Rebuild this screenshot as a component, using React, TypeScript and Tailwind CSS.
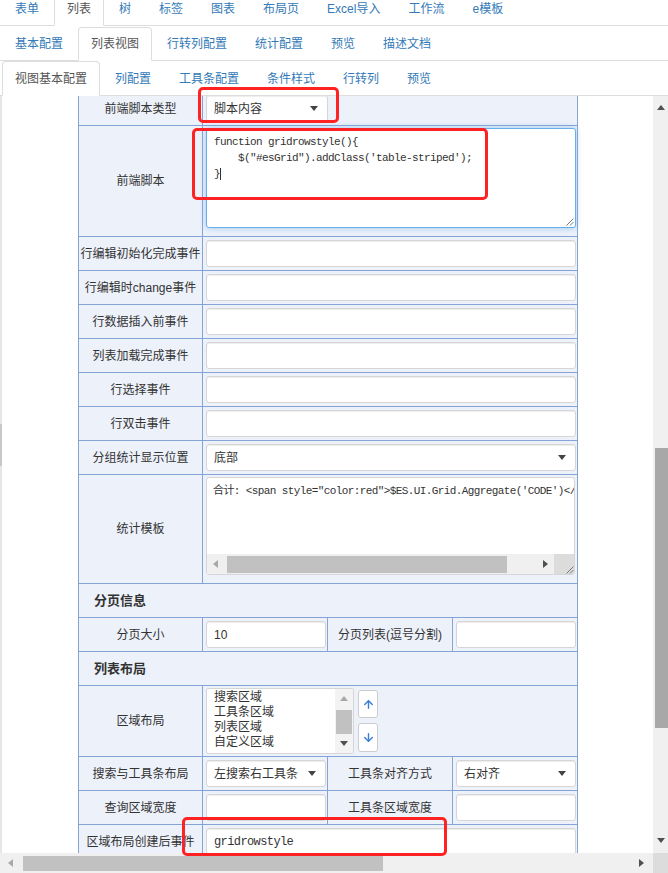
import { ArrowDown, ArrowUp } from "lucide-react";

const MONO = "font-['Liberation_Mono','Noto_Sans_CJK_SC',monospace] text-[11px] tracking-[-0.6px]";
const cell = "border-r border-b border-[#86a3d6] bg-[#edf1fa]";
const labelCell = `${cell} flex items-center justify-center text-[12px] text-[#333] whitespace-nowrap`;
const valueCell = `${cell} flex items-center pl-[3px] pr-[1px]`;
const boxBase = "h-[27px] bg-white border border-[#d6d6d6] rounded-[3px] shadow-[inset_0_1px_1px_rgba(0,0,0,0.075)] flex items-center text-[12px] text-[#333] overflow-hidden whitespace-nowrap";

function Caret({ dir = "down", className = "" }: { dir?: "up" | "down" | "left" | "right"; className?: string }) {
  const pts = { down: "0,0 8,0 4,5", up: "0,5 8,5 4,0", left: "5,0 5,8 0,4", right: "0,0 0,8 5,4" }[dir];
  const vertical = dir === "up" || dir === "down";
  return (
    <svg width={vertical ? 8 : 5} height={vertical ? 5 : 8} className={className}>
      <polygon points={pts} fill="currentColor" />
    </svg>
  );
}

function Grip() {
  return (
    <svg width="10" height="10">
      <path d="M9.5 2.5 L2.5 9.5 M9.5 6 L6 9.5" stroke="#777" strokeWidth="1" />
    </svg>
  );
}

function Input({ value = "", mono = false, className = "w-full" }: { value?: string; mono?: boolean; className?: string }) {
  return <div className={`${className} ${boxBase} px-[7px] ${mono ? MONO : ""}`}>{value}</div>;
}

function Select({ value, className = "w-full" }: { value: string; className?: string }) {
  return (
    <div className={`${className} ${boxBase} justify-between pl-[7px] pr-[9px]`}>
      <span>{value}</span>
      <Caret className="text-[#444]" />
    </div>
  );
}

function TabRow({ items, active, rowClass, tabClass }: { items: string[]; active: number; rowClass: string; tabClass: string }) {
  return (
    <div className={`flex items-end pl-[2px] border-b border-[#ddd] ${rowClass}`}>
      {items.map((t, i) => (
        <div
          key={t}
          className={`${tabClass} -mb-px mr-[2px] px-[12px] border text-[12px] whitespace-nowrap ${
            i === active ? "bg-white border-[#ddd] border-b-white text-[#555]" : "border-transparent text-[#337ab7]"
          }`}
        >
          {t}
        </div>
      ))}
    </div>
  );
}

function Label({ text, h = "h-[34px]" }: { text: string; h?: string }) {
  return <div className={`${labelCell} ${h}`}>{text}</div>;
}

function Section({ text }: { text: string }) {
  return <div className={`${cell} col-span-4 h-[34px] flex items-center pl-[15px] text-[13px] font-bold text-[#333]`}>{text}</div>;
}

const events = ["行编辑初始化完成事件", "行编辑时change事件", "行数据插入前事件", "列表加载完成事件", "行选择事件", "行双击事件"];

export default function App() {
  return (
    <div className="relative w-[668px] h-[873px] overflow-hidden bg-white font-['Liberation_Sans','Noto_Sans_CJK_SC',sans-serif] text-[#333]">
      <TabRow
        items={["表单", "列表", "树", "标签", "图表", "布局页", "Excel导入", "工作流", "e模板"]}
        active={1}
        rowClass="h-[26px]"
        tabClass="h-[26px] border-t-0 pt-[1px] leading-[16px]"
      />
      <TabRow
        items={["基本配置", "列表视图", "行转列配置", "统计配置", "预览", "描述文档"]}
        active={1}
        rowClass="h-[35px]"
        tabClass="h-[34px] flex items-center rounded-t-[4px]"
      />
      <TabRow
        items={["视图基本配置", "列配置", "工具条配置", "条件样式", "行转列", "预览"]}
        active={0}
        rowClass="h-[35px]"
        tabClass="h-[35px] flex items-center rounded-t-[4px]"
      />

      <div className="flex h-[757px]">
        <div className="w-[2px] bg-[#e6e6e6]">
          <div className="mt-[328px] h-[42px] bg-[#c8c8c8]" />
        </div>

        <div className="flex-1 overflow-hidden">
          <div className="ml-[76px] -mt-[5px] w-[500px] grid grid-cols-[124px_125px_125px_125px] border-l border-t border-[#86a3d6]">
            <Label text="前端脚本类型" />
            <div className={`${valueCell} col-span-3 h-[34px]`}>
              <Select value="脚本内容" className="w-[122px]" />
            </div>

            <Label text="前端脚本" h="h-[111px]" />
            <div className={`${cell} col-span-3 h-[111px] pl-[3px] pr-[1px] pt-[2px]`}>
              <div className="relative h-[100px] bg-white border border-[#66afe9] rounded-[3px] shadow-[0_0_6px_rgba(102,175,233,0.6)] px-[7px] pt-[5px]">
                <div className={`${MONO} leading-[16px] whitespace-pre text-[#333]`}>
                  <div>function gridrowstyle(){"{"}</div>
                  <div>{"    $(\"#esGrid\").addClass('table-striped');"}</div>
                  <div>
                    <span className="border-r border-[#333]">{"}"}</span>
                  </div>
                </div>
                <div className="absolute right-[1px] bottom-[1px]">
                  <Grip />
                </div>
              </div>
            </div>

            {events.map((e) => (
              <div key={e} className="contents">
                <Label text={e} />
                <div className={`${valueCell} col-span-3 h-[34px]`}>
                  <Input />
                </div>
              </div>
            ))}

            <Label text="分组统计显示位置" />
            <div className={`${valueCell} col-span-3 h-[34px]`}>
              <Select value="底部" />
            </div>

            <Label text="统计模板" h="h-[109px]" />
            <div className={`${cell} col-span-3 h-[109px] pl-[3px] pr-[2px] pt-[2px]`}>
              <div className="h-[98px] bg-white border border-[#d6d6d6] rounded-[3px] flex flex-col overflow-hidden">
                <div className={`${MONO} flex-1 px-[6px] pt-[5px] leading-[16px] whitespace-nowrap overflow-hidden`}>
                  合计: {'<span style="color:red">$ES.UI.Grid.Aggregate(\'CODE\')</span>'}
                </div>
                <div className="h-[20px] flex">
                  <div className="flex-1 bg-[#f0f0f0] flex items-center">
                    <div className="w-[17px] flex justify-center text-[#a8a8a8]">
                      <Caret dir="left" />
                    </div>
                    <div className="ml-[3px] w-[280px] h-[17px] bg-[#c1c1c1]" />
                    <div className="flex-1" />
                    <div className="w-[17px] flex justify-center text-[#505050]">
                      <Caret dir="right" />
                    </div>
                  </div>
                  <div className="w-[20px] bg-[#dcdcdc] flex items-end justify-end">
                    <Grip />
                  </div>
                </div>
              </div>
            </div>

            <Section text="分页信息" />

            <Label text="分页大小" />
            <div className={`${valueCell} h-[34px]`}>
              <Input value="10" />
            </div>
            <Label text="分页列表(逗号分割)" />
            <div className={`${valueCell} h-[34px]`}>
              <Input />
            </div>

            <Section text="列表布局" />

            <Label text="区域布局" h="h-[71px]" />
            <div className={`${valueCell} col-span-3 h-[71px] gap-[4px]`}>
              <div className="w-[148px] h-[66px] bg-white border border-[#d6d6d6] rounded-[2px] flex overflow-hidden">
                <div className="flex-1 pl-[7px] pt-[1px] text-[12px] leading-[15px] text-[#333]">
                  <div>搜索区域</div>
                  <div>工具条区域</div>
                  <div>列表区域</div>
                  <div>自定义区域</div>
                </div>
                <div className="w-[18px] bg-[#f3f3f3] flex flex-col">
                  <div className="h-[18px] flex items-center justify-center text-[#a8a8a8]">
                    <Caret dir="up" />
                  </div>
                  <div className="mt-[3px] mx-[1px] h-[24px] bg-[#c1c1c1]" />
                  <div className="mt-[1px] h-[16px] flex items-center justify-center text-[#505050]">
                    <Caret dir="down" />
                  </div>
                </div>
              </div>
              <div className="flex flex-col gap-[5px]">
                <div className="w-[20px] h-[28px] bg-white border border-[#ccc] rounded-[3px] flex items-center justify-center">
                  <ArrowUp size={13} strokeWidth={2.6} color="#3b7dd8" />
                </div>
                <div className="w-[20px] h-[29px] bg-white border border-[#ccc] rounded-[3px] flex items-center justify-center">
                  <ArrowDown size={13} strokeWidth={2.6} color="#3b7dd8" />
                </div>
              </div>
            </div>

            <Label text="搜索与工具条布局" />
            <div className={`${valueCell} h-[34px]`}>
              <Select value="左搜索右工具条" />
            </div>
            <Label text="工具条对齐方式" />
            <div className={`${valueCell} h-[34px]`}>
              <Select value="右对齐" />
            </div>

            <Label text="查询区域宽度" />
            <div className={`${valueCell} h-[34px]`}>
              <Input />
            </div>
            <Label text="工具条区域宽度" />
            <div className={`${valueCell} h-[34px]`}>
              <Input />
            </div>

            <Label text="区域布局创建后事件" />
            <div className={`${valueCell} col-span-3 h-[34px]`}>
              <Input value="gridrowstyle" mono />
            </div>
          </div>
        </div>

        <div className="w-[15px] bg-[#f0f0f0] flex flex-col">
          <div className="h-[22px] flex items-center justify-center text-[#505050]">
            <Caret dir="up" />
          </div>
          <div className="mt-[330px] ml-[2px] h-[280px] bg-[#a8a8a8]" />
          <div className="flex-1" />
          <div className="h-[26px] flex items-center justify-center text-[#505050]">
            <Caret dir="down" />
          </div>
        </div>
      </div>

      <div className="h-[20px] flex">
        <div className="flex-1 bg-[#f0f0f0] flex items-center">
          <div className="w-[20px] flex justify-center text-[#a8a8a8]">
            <Caret dir="left" />
          </div>
          <div className="ml-[3px] w-[360px] h-[15px] bg-[#c1c1c1]" />
          <div className="flex-1" />
          <div className="w-[24px] flex justify-center text-[#505050]">
            <Caret dir="right" />
          </div>
        </div>
        <div className="w-[15px] bg-[#dcdcdc]" />
      </div>

      {/* annotation boxes */}
      <div className="absolute left-[198px] top-[87px] w-[141px] h-[36px] border-[3px] border-[#ff2222] rounded-[5px]" />
      <div className="absolute left-[192px] top-[128px] w-[296px] h-[72px] border-[3px] border-[#ff2222] rounded-[5px]" />
      <div className="absolute left-[182px] top-[817px] w-[265px] h-[39px] border-[3px] border-[#ff2222] rounded-[5px]" />
    </div>
  );
}
